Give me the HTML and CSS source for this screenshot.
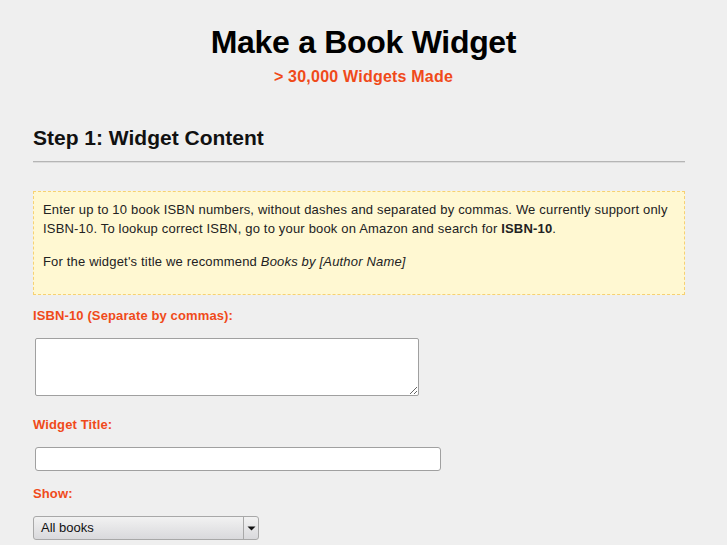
FILE: index.html
```html
<!DOCTYPE html>
<html>
<head>
<meta charset="utf-8">
<title>Make a Book Widget</title>
<link rel="stylesheet" href="styles.css">
</head>
<body>
<header class="masthead">
  <h1 class="title">Make a Book Widget</h1>
  <p class="count">&gt; 30,000 Widgets Made</p>
</header>
<main class="page">
  <h2 class="step">Step 1: Widget Content</h2>
  <hr class="rule">
  <div class="note">
    <p>Enter up to 10 book ISBN numbers, without dashes and separated by commas. We currently support only ISBN-10. To lookup correct ISBN, go to your book on Amazon and search for <strong>ISBN-10</strong>.</p>
    <p>For the widget's title we recommend <em>Books by [Author Name]</em></p>
  </div>
  <label class="label label-first">ISBN-10 (Separate by commas):</label>
  <textarea class="area"></textarea>
  <label class="label label-title">Widget Title:</label>
  <input class="text" type="text">
  <label class="label label-show">Show:</label>
  <div class="select">
    <span class="select-value">All books</span>
    <span class="select-btn"><svg width="9" height="5" viewBox="0 0 9 5"><path d="M0.5 0.5h8l-4 4z" fill="#111"/></svg></span>
  </div>
</main>
</body>
</html>
```
FILE: styles.css
```css
html, body {
  margin: 0;
  padding: 0;
  background: #efefef;
}
body {
  font-family: "Liberation Sans", Arial, sans-serif;
  color: #222;
}
.masthead {
  text-align: center;
  padding-top: 24px;
}
.title {
  margin: 0;
  font-size: 32px;
  line-height: 36px;
  font-weight: bold;
  color: #000;
  letter-spacing: -0.3px;
}
.count {
  margin: 7px 0 0;
  font-size: 16px;
  line-height: 20px;
  font-weight: bold;
  color: #f04a1a;
  letter-spacing: 0.22px;
}
.page {
  width: 652px;
  margin-left: 33px;
  padding-top: 39px;
}
.step {
  margin: 0;
  font-size: 21px;
  line-height: 24px;
  font-weight: bold;
  color: #111;
}
.rule {
  margin: 11px 0 0;
  height: 0;
  border: 0;
  border-top: 1px solid #b5b5b5;
  border-bottom: 1px solid #dcdcdc;
}
.note {
  margin-top: 28px;
  background: #fff8d2;
  border: 1px dashed #f7d172;
  padding: 8px 9px 9px;
  font-size: 13px;
  line-height: 19px;
  letter-spacing: 0.18px;
  color: #222;
}
.note p {
  margin: 0 0 14px;
}
.label {
  display: block;
  font-size: 13px;
  line-height: 16px;
  font-weight: bold;
  color: #f04a1a;
  letter-spacing: 0.12px;
}
.label-first { margin-top: 13px; }
.label-title { margin-top: 21px; }
.label-show { margin-top: 15px; }
.area {
  display: block;
  box-sizing: border-box;
  margin: 14px 0 0 2px;
  width: 384px;
  height: 58px;
  border: 1px solid #a0a0a0;
  border-radius: 2px;
  background: #fff;
}
.text {
  display: block;
  box-sizing: border-box;
  margin: 14px 0 0 2px;
  width: 406px;
  height: 24px;
  border: 1px solid #a0a0a0;
  border-radius: 3px;
  background: #fff;
  padding: 0;
}
.select {
  margin-top: 14px;
  box-sizing: border-box;
  width: 226px;
  height: 24px;
  display: flex;
  border: 1px solid #a8a8a8;
  border-radius: 3px;
  background: linear-gradient(#f2f2f2, #d9d9dc);
  font-size: 13px;
  color: #111;
}
.select-value {
  flex: 1;
  padding-left: 7px;
  line-height: 22px;
}
.select-btn {
  width: 14px;
  border-left: 1px solid #a8a8a8;
  display: flex;
  align-items: center;
  justify-content: center;
}
```
